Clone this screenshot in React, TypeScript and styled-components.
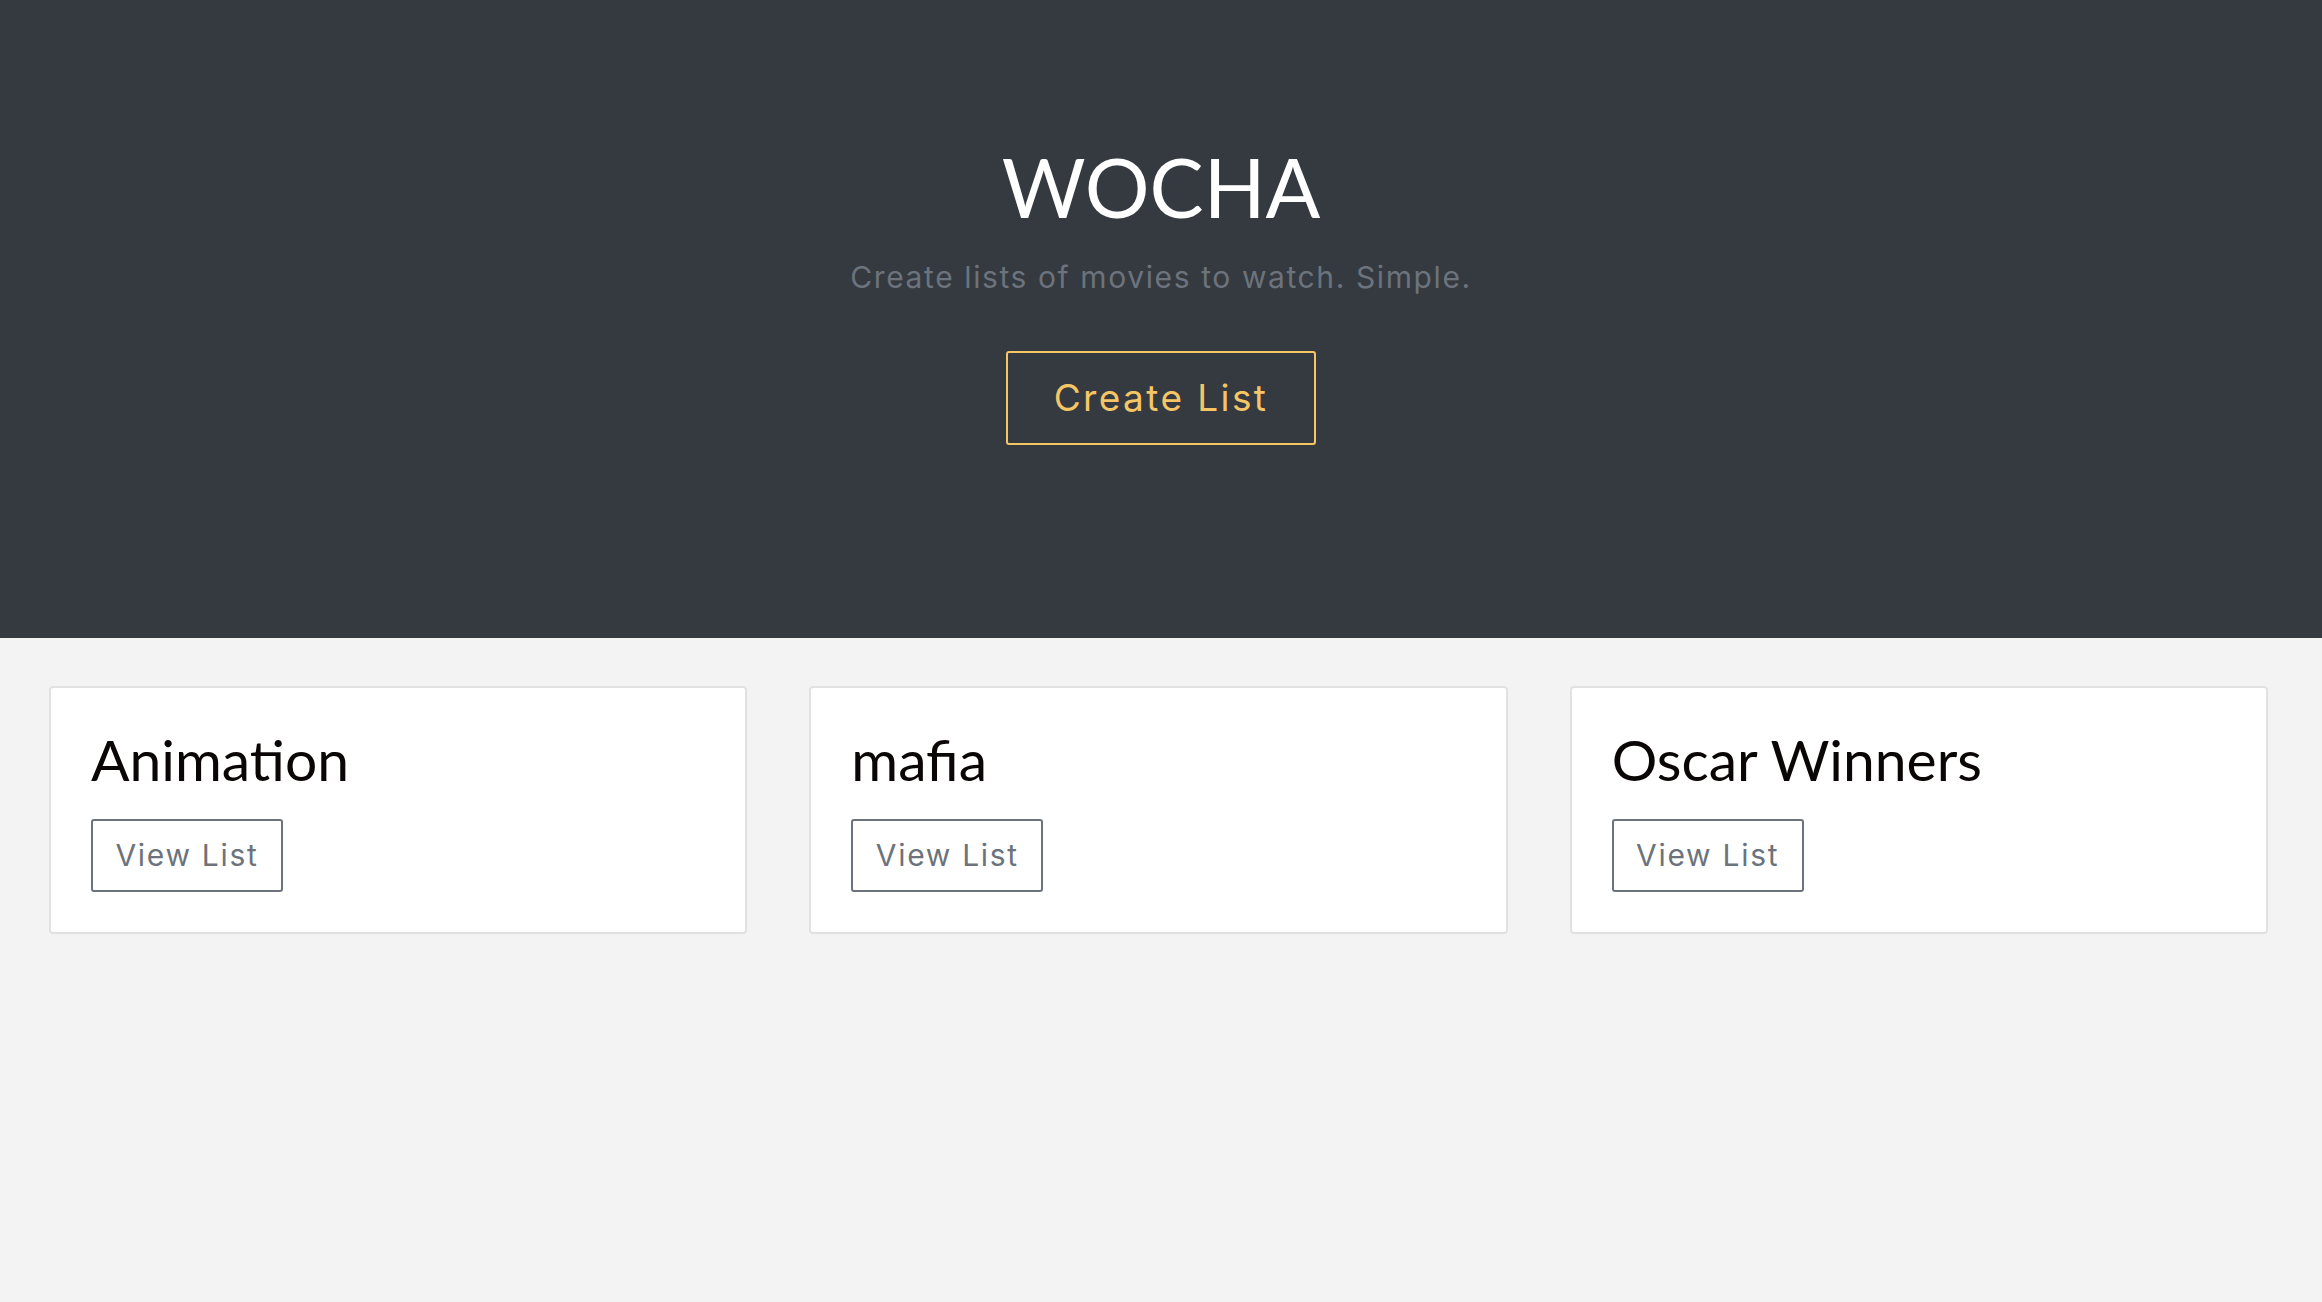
import React from 'react';
import styled, { createGlobalStyle } from 'styled-components';

interface MovieList {
  id: number;
  name: string;
}

const lists: MovieList[] = [
  { id: 1, name: 'Animation' },
  { id: 2, name: 'mafia' },
  { id: 3, name: 'Oscar Winners' },
];

const GlobalStyle = createGlobalStyle`
  html, body {
    margin: 0;
    padding: 0;
    background: #f3f3f3;
  }
  * {
    box-sizing: border-box;
  }
`;

const App: React.FC = () => {
  return (
    <>
      <GlobalStyle />
      <Page>
        <Hero>
          <BrandTitle>WOCHA</BrandTitle>
          <Lead>Create lists of movies to watch. Simple.</Lead>
          <CreateButton type="button">Create List</CreateButton>
        </Hero>
        <CardGrid>
          {lists.map(list => (
            <ListCard key={list.id}>
              <CardTitle>{list.name}</CardTitle>
              <ViewButton type="button">View List</ViewButton>
            </ListCard>
          ))}
        </CardGrid>
      </Page>
    </>
  );
};

const Page = styled.div`
  min-height: 1302px;
  background: #f3f3f3;
`;

const Hero = styled.header`
  height: 638px;
  background: #343a40;
  padding-top: 137px;
  display: flex;
  flex-direction: column;
  align-items: center;
`;

const BrandTitle = styled.h1`
  font-family: Lato, "Noto Sans", sans-serif;
  font-weight: 400;
  font-size: 81px;
  line-height: 99px;
  color: #ffffff;
  margin: 0;
`;

const Lead = styled.p`
  font-family: Inter, "Noto Sans", sans-serif;
  font-weight: 400;
  font-size: 30px;
  line-height: 45px;
  letter-spacing: 1.6px;
  color: #6c737c;
  margin: 19px 0 0 0;
`;

const CreateButton = styled.button`
  margin-top: 51px;
  font-family: Inter, "Noto Sans", sans-serif;
  font-size: 37px;
  line-height: 54px;
  font-weight: 400;
  letter-spacing: 2.4px;
  color: #f5c566;
  background: transparent;
  border: 2px solid #f5c566;
  border-radius: 3px;
  padding: 18px 0;
  width: 310px;
  cursor: pointer;
`;

const CardGrid = styled.main`
  display: grid;
  grid-template-columns: repeat(3, 1fr);
  gap: 62px;
  padding: 48px 54px 0 49px;
`;

const ListCard = styled.section`
  background: #ffffff;
  border: 2px solid #e1e1e1;
  border-radius: 4px;
  padding: 38px 40px 40px;
  display: flex;
  flex-direction: column;
  align-items: flex-start;
`;

const CardTitle = styled.h2`
  font-family: Lato, "Noto Sans", sans-serif;
  font-weight: 400;
  font-size: 57px;
  line-height: 67px;
  color: #0b0606;
  margin: 0 0 26px 0;
`;

const ViewButton = styled.button`
  font-family: Inter, "Noto Sans", sans-serif;
  font-size: 30px;
  line-height: 45px;
  letter-spacing: 1.7px;
  color: #6c737c;
  background: #ffffff;
  border: 2px solid #6c737c;
  border-radius: 3px;
  padding: 12px 0;
  width: 192px;
  cursor: pointer;
`;

export default App;
